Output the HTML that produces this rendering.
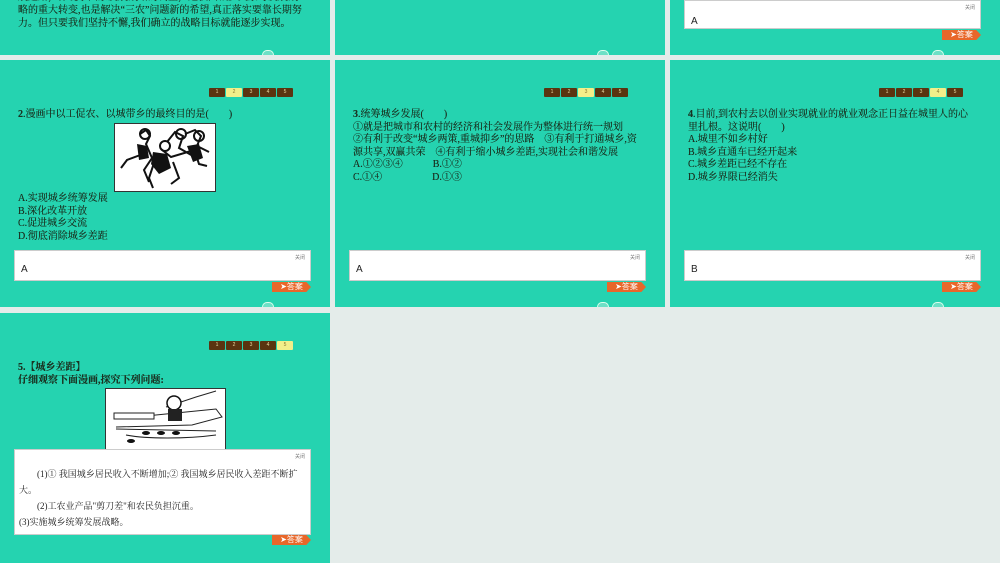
<!DOCTYPE html>
<html><head><meta charset="utf-8"><style>
*{margin:0;padding:0;box-sizing:border-box}
body{width:1000px;height:556px;overflow:hidden;background:#e4ecea;position:relative;font-family:"Liberation Serif","Noto Serif CJK SC",serif;color:#1a3322}
.s{position:absolute;width:330px;background:#25d3b0;overflow:hidden}
.t{position:absolute;left:18px;font-size:10px;line-height:12.6px;white-space:nowrap;text-shadow:0 0 .3px #1a3322}
.nav{position:absolute;left:209px;top:28px;display:flex;gap:1px}
.nav span{width:16px;height:9px;background:#5a3410;color:#e8d8a0;font-size:5px;line-height:9px;text-align:center;font-family:"Liberation Sans",sans-serif;border-radius:1px}
.nav span.on{background:#f3ef8a;color:#8a7a30}
.ab{position:absolute;left:14px;width:297px;background:#fff;border:1px solid #ccc}
.ab .c{position:absolute;right:5px;top:3px;font-size:5px;color:#777;font-family:"Liberation Sans","Noto Sans CJK SC",sans-serif}
.ab .a{position:absolute;left:6px;font-size:10px;font-family:"Liberation Sans",sans-serif;color:#222}
.btn{position:absolute;left:272px;width:39px;height:10px;background:#e8672a;color:#fff;font-size:8px;line-height:10px;text-align:center;font-family:"Liberation Sans","Noto Sans CJK SC",sans-serif;clip-path:polygon(0 0,88% 0,100% 50%,88% 100%,0 100%)}
.bump{position:absolute;left:262px;width:12px;height:5px;border-radius:6px 6px 0 0;border:1px solid #dfe;border-bottom:none;background:#6de0c6}
.img{position:absolute;background:#fff;border:1px solid #333}
</style></head><body>

<!-- row1 -->
<div class="s" style="left:0;top:-190px;height:245px">
<div class="t" style="top:181px;line-height:13px">展道路，体现了国家发展战略的调整，是我国城乡关系与发展战<br>略的重大转变,也是解决“三农”问题新的希望,真正落实要靠长期努<br>力。但只要我们坚持不懈,我们确立的战略目标就能逐步实现。</div>
<div class="bump" style="top:240px"></div>
</div>
<div class="s" style="left:335px;top:-190px;height:245px"><div class="bump" style="top:240px"></div></div>
<div class="s" style="left:670px;top:-190px;height:245px">
<div class="ab" style="top:190px;height:29px"><div class="c">关闭</div><div class="a" style="top:15px">A</div></div>
<div class="btn" style="top:220px">➤答案</div>
<div class="bump" style="top:240px"></div>
</div>

<!-- row2 -->
<div class="s" style="left:0;top:60px;height:247px">
<div class="nav"><span>1</span><span class="on">2</span><span>3</span><span>4</span><span>5</span></div>
<div class="t" style="top:49px"><b>2</b>.漫画中以工促农、以城带乡的最终目的是(　　)</div>
<div class="img" style="left:114px;top:63px;width:102px;height:69px">
<svg width="100" height="67" viewBox="0 0 100 67"><g fill="none" stroke="#111" stroke-width="2">
<path d="M25 10l6-4 4 6-4 8 6 14-8 12 5 12M28 30l-16 6-6 8M46 25l10 8 20-6M52 18l8-10 8 4-4 12 14 8M70 10l10-4 6 6-4 10 12 6M40 36l-6 18 4 10M58 38l6 16-8 6M80 28l4 12 8 2"/>
<circle cx="30" cy="10" r="5"/><circle cx="50" cy="22" r="5"/><circle cx="66" cy="10" r="5"/><circle cx="84" cy="12" r="5"/></g>
<g fill="#111"><path d="M38 28l14 2 4 14-12 6-8-10z"/><path d="M72 22l12-2 4 14-10 4z"/><path d="M22 20l10 2 2 12-10 2z"/></g></svg></div>
<div class="t" style="top:133px">A.实现城乡统筹发展<br>B.深化改革开放<br>C.促进城乡交流<br>D.彻底消除城乡差距</div>
<div class="ab" style="top:190px;height:31px"><div class="c">关闭</div><div class="a" style="top:13px">A</div></div>
<div class="btn" style="top:222px">➤答案</div>
<div class="bump" style="top:242px"></div>
</div>

<div class="s" style="left:335px;top:60px;height:247px">
<div class="nav"><span>1</span><span>2</span><span class="on">3</span><span>4</span><span>5</span></div>
<div class="t" style="top:49px"><b>3</b>.统筹城乡发展(　　)<br>①就是把城市和农村的经济和社会发展作为整体进行统一规划<br>②有利于改变“城乡两策,重城抑乡”的思路　③有利于打通城乡,资<br>源共享,双赢共荣　④有利于缩小城乡差距,实现社会和谐发展<br>A.①②③④　　　B.①②<br>C.①④　　　　　D.①③</div>
<div class="ab" style="top:190px;height:31px"><div class="c">关闭</div><div class="a" style="top:13px">A</div></div>
<div class="btn" style="top:222px">➤答案</div>
<div class="bump" style="top:242px"></div>
</div>

<div class="s" style="left:670px;top:60px;height:247px">
<div class="nav"><span>1</span><span>2</span><span>3</span><span class="on">4</span><span>5</span></div>
<div class="t" style="top:49px"><b>4</b>.目前,到农村去以创业实现就业的就业观念正日益在城里人的心<br>里扎根。这说明(　　)<br>A.城里不如乡村好<br>B.城乡直通车已经开起来<br>C.城乡差距已经不存在<br>D.城乡界限已经消失</div>
<div class="ab" style="top:190px;height:31px"><div class="c">关闭</div><div class="a" style="top:13px">B</div></div>
<div class="btn" style="top:222px">➤答案</div>
<div class="bump" style="top:242px"></div>
</div>

<!-- row3 -->
<div class="s" style="left:0;top:313px;height:250px">
<div class="nav"><span>1</span><span>2</span><span>3</span><span>4</span><span class="on">5</span></div>
<div class="t" style="top:49px"><b>5.【城乡差距】</b><br><b>仔细观察下面漫画,探究下列问题:</b></div>
<div class="img" style="left:105px;top:75px;width:121px;height:65px">
<svg width="119" height="63" viewBox="0 0 119 63"><g fill="none" stroke="#222" stroke-width="1"><path d="M10 30l60-6 40-4 6 8-30 8-76 2M60 18l30-10 20-6M10 40l100 2M20 46c20 4 60 4 90 0"/></g>
<rect x="8" y="24" width="40" height="6" fill="#fff" stroke="#222"/><circle cx="68" cy="14" r="7" fill="#fff" stroke="#111" stroke-width="1.5"/><path d="M62 20h14v12H62z" fill="#222"/>
<g fill="#111"><ellipse cx="40" cy="44" rx="4" ry="2"/><ellipse cx="55" cy="44" rx="4" ry="2"/><ellipse cx="70" cy="44" rx="4" ry="2"/><ellipse cx="25" cy="52" rx="4" ry="2"/></g></svg></div>
<div class="ab" style="top:136px;height:86px"><div class="c">关闭</div>
<div class="t" style="left:4px;top:16px;font-size:9px;line-height:16px;color:#222;white-space:normal;width:290px;text-shadow:none">　　(1)① 我国城乡居民收入不断增加;② 我国城乡居民收入差距不断扩大。<br><span style="line-height:14px">　　(2)工农业产品"剪刀差"和农民负担沉重。<br>(3)实施城乡统筹发展战略。</span></div></div>
<div class="btn" style="top:222px">➤答案</div>
</div>
</body></html>
